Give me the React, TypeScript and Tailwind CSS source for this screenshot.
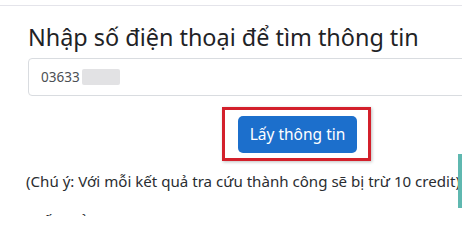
import React from 'react';

const FONT = { fontFamily: '"Noto Sans", "Open Sans", Arial, sans-serif' };

export default function App() {
  return (
    <div className="relative h-[216px] w-[462px] overflow-hidden bg-white text-[#212529]" style={FONT}>
      {/* top navbar edge */}
      <div className="h-[6px] border-b border-[#e4e4ea]" />

      <div className="pl-[28px]">
        <h3 className="mt-[16px] whitespace-nowrap text-[23.4px] leading-[30px] font-normal text-[#1f2326]">
          Nhập số điện thoại để tìm thông tin
        </h3>

        <div className="mt-[6px] flex h-[38px] w-[480px] items-center rounded-[4px] border border-[#d9dce0] bg-white pl-[12px]">
          <span className="text-[13.5px] text-[#4b4f54]">03633</span>
          <span className="ml-[2px] h-[16px] w-[38px] rounded-[2px] bg-[#e2e2e4]" />
        </div>

        <div className="mt-[11px] ml-[194px] inline-flex border-[3px] border-[#d3202b] pt-[6px] pr-[11px] pb-[5px] pl-[13px] shadow-[1px_1px_3px_rgba(0,0,0,0.25)]">
          <button className="h-[37px] w-[119px] rounded-[5px] bg-[#1c6fcc] text-[15.5px] text-white">
            Lấy thông tin
          </button>
        </div>

        <p className="mt-[9px] -ml-[2px] whitespace-nowrap text-[15.1px] leading-[22px] text-[#2a2d31]">
          (Chú ý: Với mỗi kết quả tra cứu thành công sẽ bị trừ 10 credit)
        </p>

        <p className="mt-[17px] ml-[6px] whitespace-nowrap text-[15px] leading-[22px] text-[#2a2d31]">
          Kết quả:
        </p>
      </div>

      {/* sidebar tab peeking from the right */}
      <div className="absolute right-0 top-[154px] h-[54px] w-[4px] bg-[#5fb8b0]" />
    </div>
  );
}
